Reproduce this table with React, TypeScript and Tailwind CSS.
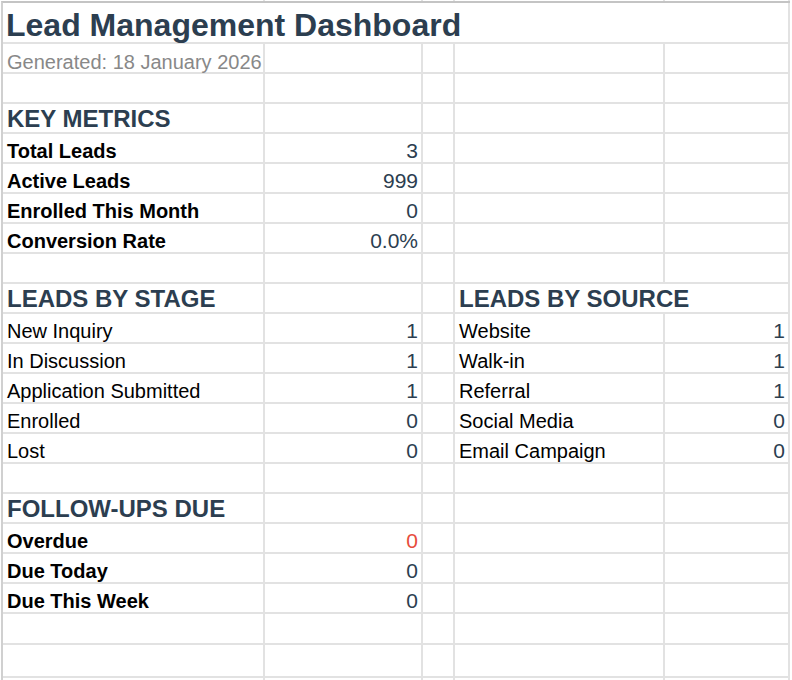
import React from "react";

type Kind = "title" | "sub" | "section" | "blabel" | "label" | "value" | "red" | "empty";
type Cell = { k: Kind; t?: string; span?: 2 | 5 };
type Row = { h: 30 | 31 | 33 | 41; cells: Cell[] };

const E: Cell = { k: "empty" };

const kindClass: Record<Kind, string> = {
  title: "justify-start pl-[3px] pb-[1px] text-[32px] leading-[32px] font-bold text-[#2c3e50]",
  sub: "justify-start pl-[4px] pb-0 text-[20px] leading-[20px] text-[#888888]",
  section: "justify-start pl-[4px] pb-[1.5px] text-[24px] leading-[24px] font-bold text-[#2c3e50]",
  blabel: "justify-start pl-[4px] pb-[1px] text-[20px] leading-[20px] font-bold text-black",
  label: "justify-start pl-[4px] pb-[1px] text-[20px] leading-[20px] text-black",
  value: "justify-end pr-[3px] pb-[1px] text-[21px] leading-[21px] text-[#2c3e50]",
  red: "justify-end pr-[3px] pb-[1px] text-[21px] leading-[21px] text-[#e74c3c]",
  empty: "",
};

const heightClass: Record<number, string> = {
  30: "h-[30px]",
  31: "h-[31px]",
  33: "h-[33px]",
  41: "h-[41px]",
};

const spanClass: Record<number, string> = {
  1: "",
  2: "col-span-2",
  5: "col-span-5",
};

const blank: Row = { h: 30, cells: [E, E, E, E, E] };

const rows: Row[] = [
  { h: 41, cells: [{ k: "title", t: "Lead Management Dashboard", span: 5 }] },
  { h: 30, cells: [{ k: "sub", t: "Generated: 18 January 2026" }, E, E, E, E] },
  blank,
  { h: 30, cells: [{ k: "section", t: "KEY METRICS" }, E, E, E, E] },
  { h: 30, cells: [{ k: "blabel", t: "Total Leads" }, { k: "value", t: "3" }, E, E, E] },
  { h: 30, cells: [{ k: "blabel", t: "Active Leads" }, { k: "value", t: "999" }, E, E, E] },
  { h: 30, cells: [{ k: "blabel", t: "Enrolled This Month" }, { k: "value", t: "0" }, E, E, E] },
  { h: 30, cells: [{ k: "blabel", t: "Conversion Rate" }, { k: "value", t: "0.0%" }, E, E, E] },
  blank,
  {
    h: 30,
    cells: [
      { k: "section", t: "LEADS BY STAGE" },
      E,
      E,
      { k: "section", t: "LEADS BY SOURCE", span: 2 },
    ],
  },
  { h: 30, cells: [{ k: "label", t: "New Inquiry" }, { k: "value", t: "1" }, E, { k: "label", t: "Website" }, { k: "value", t: "1" }] },
  { h: 30, cells: [{ k: "label", t: "In Discussion" }, { k: "value", t: "1" }, E, { k: "label", t: "Walk-in" }, { k: "value", t: "1" }] },
  { h: 30, cells: [{ k: "label", t: "Application Submitted" }, { k: "value", t: "1" }, E, { k: "label", t: "Referral" }, { k: "value", t: "1" }] },
  { h: 30, cells: [{ k: "label", t: "Enrolled" }, { k: "value", t: "0" }, E, { k: "label", t: "Social Media" }, { k: "value", t: "0" }] },
  { h: 30, cells: [{ k: "label", t: "Lost" }, { k: "value", t: "0" }, E, { k: "label", t: "Email Campaign" }, { k: "value", t: "0" }] },
  blank,
  { h: 30, cells: [{ k: "section", t: "FOLLOW-UPS DUE" }, E, E, E, E] },
  { h: 30, cells: [{ k: "blabel", t: "Overdue" }, { k: "red", t: "0" }, E, E, E] },
  { h: 30, cells: [{ k: "blabel", t: "Due Today" }, { k: "value", t: "0" }, E, E, E] },
  { h: 30, cells: [{ k: "blabel", t: "Due This Week" }, { k: "value", t: "0" }, E, E, E] },
  { h: 31, cells: [E, E, E, E, E] },
  { h: 33, cells: [E, E, E, E, E] },
  blank,
];

const cols = "grid grid-cols-[262px_158px_32px_210px_125px]";

export default function App() {
  return (
    <div
      className="w-[792px] h-[680px] overflow-hidden bg-white"
      style={{ fontFamily: '"Liberation Sans", Arial, sans-serif' }}
    >
      <div className="ml-[1px]">
        <div className={`${cols} h-[1px] pl-[2px]`}>
          {[0, 1, 2, 3, 4].map((i) => (
            <div key={i} className="border-r-2 border-[#e2e2e2]" />
          ))}
        </div>
        <div className={`${cols} w-max border-l-2 border-t-2 border-l-[#d0d0d0] border-t-[#c4c4c4]`}>
          {rows.map((row, ri) =>
            row.cells.map((c, ci) => (
              <div
                key={`${ri}-${ci}`}
                className={`flex items-end whitespace-nowrap border-r-2 border-b-2 border-[#e2e2e2] ${heightClass[row.h]} ${spanClass[c.span ?? 1]} ${kindClass[c.k]}`}
              >
                {c.t ?? ""}
              </div>
            ))
          )}
        </div>
      </div>
    </div>
  );
}
